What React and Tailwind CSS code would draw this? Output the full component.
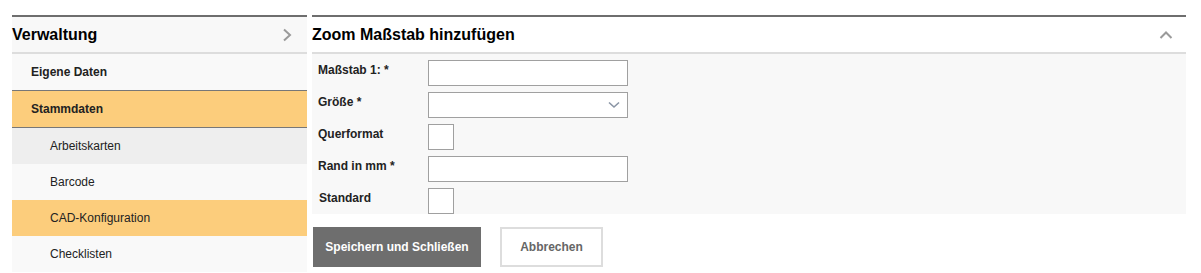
import React from "react";

const sideItems = [
  { label: "Arbeitskarten", bg: "bg-[#eeeeee]" },
  { label: "Barcode", bg: "bg-[#f9f9f9]" },
  { label: "CAD-Konfiguration", bg: "bg-[#fccd7c]" },
  { label: "Checklisten", bg: "bg-[#f9f9f9]" },
];

function FieldLabel({ children, className = "" }) {
  return (
    <label className={`w-[110px] pt-[1px] text-[12px] leading-[18px] font-bold text-[#222] ${className}`}>
      {children}
    </label>
  );
}

function TextRow({ label }) {
  return (
    <div className="flex items-start h-[26px]">
      <FieldLabel>{label}</FieldLabel>
      <input type="text" className="w-[200px] h-[26px] bg-white border border-[#a0a0a0] outline-none" />
    </div>
  );
}

function CheckRow({ label, labelClass = "" }) {
  return (
    <div className="flex items-start h-[26px]">
      <FieldLabel className={labelClass}>{label}</FieldLabel>
      <div className="w-[26px] h-[26px] bg-white border border-[#a0a0a0]" />
    </div>
  );
}

export default function App() {
  return (
    <div className="w-[1201px] h-[273px] bg-white overflow-hidden pt-[15px] flex gap-[5px] pl-[12px] font-['Liberation_Sans']">
      {/* sidebar */}
      <div className="w-[295px] flex flex-col">
        <div className="border-t-2 border-[#6e6e6e] border-b-2 border-b-[#dddddd] bg-[#f8f8f8] h-[39px] flex items-center justify-between pr-[15px]">
          <span className="text-[16px] font-bold text-black">Verwaltung</span>
          <svg width="10" height="14" viewBox="0 0 10 14" fill="none">
            <path d="M2 1.5 L8 7 L2 12.5" stroke="#9a9a9a" strokeWidth="2" />
          </svg>
        </div>
        <div className="h-[37px] bg-[#f9f9f9] border-b border-[#777] flex items-center pl-[19px] text-[12px] font-bold text-[#222]">
          Eigene Daten
        </div>
        <div className="h-[37px] bg-[#fccd7c] border-b border-[#777] flex items-center pl-[19px] text-[12px] font-bold text-[#222]">
          Stammdaten
        </div>
        {sideItems.map((it) => (
          <div key={it.label} className={`h-[36px] ${it.bg} flex items-center pl-[38px] text-[12px] text-[#222]`}>
            {it.label}
          </div>
        ))}
      </div>

      {/* main panel */}
      <div className="w-[874px] flex flex-col">
        <div className="border-t-2 border-[#6e6e6e] border-b-2 border-b-[#dddddd] bg-white h-[39px] flex items-center justify-between pr-[13px]">
          <span className="text-[16px] font-bold text-black">Zoom Maßstab hinzufügen</span>
          <svg width="14" height="10" viewBox="0 0 14 10" fill="none">
            <path d="M1.5 8 L7 2.5 L12.5 8" stroke="#9a9a9a" strokeWidth="2" />
          </svg>
        </div>
        <div className="bg-[#f8f8f8] pt-[6px] pl-[6px] flex flex-col gap-[6px]">
          <TextRow label="Maßstab 1: *" />
          <div className="flex items-start h-[26px]">
            <FieldLabel>Größe *</FieldLabel>
            <div className="w-[200px] h-[26px] bg-white border border-[#a0a0a0] flex items-center justify-end pr-[7px]">
              <svg width="12" height="8" viewBox="0 0 12 8" fill="none">
                <path d="M1 1.5 L6 6 L11 1.5" stroke="#8a95a5" strokeWidth="1.6" />
              </svg>
            </div>
          </div>
          <CheckRow label="Querformat" />
          <TextRow label="Rand in mm *" />
          <CheckRow label="Standard" labelClass="pl-[1px]" />
        </div>
        <div className="flex gap-[19px] mt-[13px] pl-[1px]">
          <button className="w-[168px] h-[40px] bg-[#6e6e6e] text-white text-[12px] font-bold">
            Speichern und Schließen
          </button>
          <button className="w-[103px] h-[40px] bg-white border-2 border-[#dddddd] text-[#666] text-[12px] font-bold">
            Abbrechen
          </button>
        </div>
      </div>
    </div>
  );
}
